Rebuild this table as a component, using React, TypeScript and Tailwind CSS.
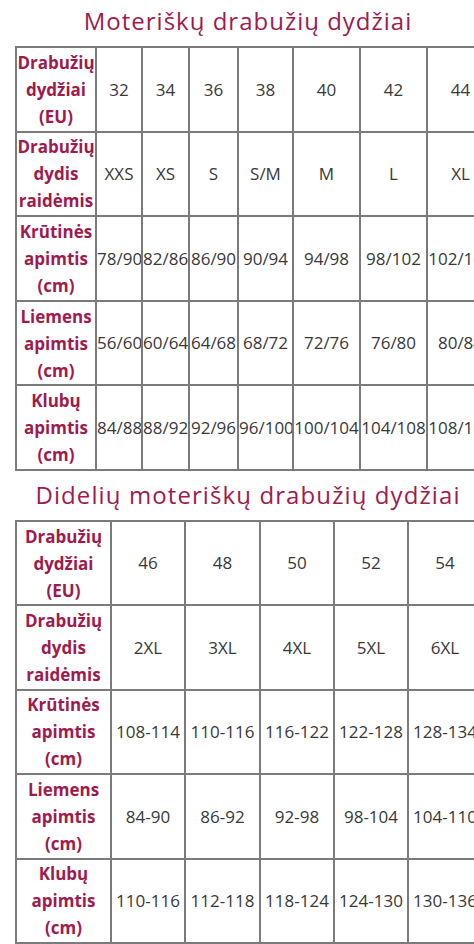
import React from "react";

const crimson = "text-[#a01a4c]";

function SizeTable({
  widths,
  rows,
  rowH,
}: {
  widths: number[];
  rows: { label: string[]; values: string[] }[];
  rowH: number;
}) {
  const total = widths.reduce((a, b) => a + b, 0);
  return (
    <table className="table-fixed border-collapse" style={{ width: total }}>
      <colgroup>
        {widths.map((w, i) => (
          <col key={i} style={{ width: w }} />
        ))}
      </colgroup>
      <tbody>
        {rows.map((r, i) => (
          <tr key={i} style={{ height: rowH }}>
            <td className="border-2 border-[#7b7b7b] p-0 text-center align-middle">
              <div className={`font-bold ${crimson} text-[17px] leading-[27px]`}>
                {r.label.map((l, j) => (
                  <div key={j}>{l}</div>
                ))}
              </div>
            </td>
            {r.values.map((v, j) => (
              <td
                key={j}
                className="border-2 border-[#7b7b7b] p-0 text-center align-middle text-[17px] text-[#383838] whitespace-nowrap overflow-hidden"
              >
                {v}
              </td>
            ))}
          </tr>
        ))}
      </tbody>
    </table>
  );
}

const labels = {
  eu: ["Drabužių", "dydžiai", "(EU)"],
  letters: ["Drabužių", "dydis", "raidėmis"],
  bust: ["Krūtinės", "apimtis", "(cm)"],
  waist: ["Liemens", "apimtis", "(cm)"],
  hips: ["Klubų", "apimtis", "(cm)"],
};

const rows1 = [
  { label: labels.eu, values: ["32", "34", "36", "38", "40", "42", "44"] },
  { label: labels.letters, values: ["XXS", "XS", "S", "S/M", "M", "L", "XL"] },
  { label: labels.bust, values: ["78/90", "82/86", "86/90", "90/94", "94/98", "98/102", "102/106"] },
  { label: labels.waist, values: ["56/60", "60/64", "64/68", "68/72", "72/76", "76/80", "80/84"] },
  { label: labels.hips, values: ["84/88", "88/92", "92/96", "96/100", "100/104", "104/108", "108/112"] },
];

const rows2 = [
  { label: labels.eu, values: ["46", "48", "50", "52", "54"] },
  { label: labels.letters, values: ["2XL", "3XL", "4XL", "5XL", "6XL"] },
  { label: labels.bust, values: ["108-114", "110-116", "116-122", "122-128", "128-134"] },
  { label: labels.waist, values: ["84-90", "86-92", "92-98", "98-104", "104-110"] },
  { label: labels.hips, values: ["110-116", "112-118", "118-124", "124-130", "130-136"] },
];

export default function App() {
  return (
    <div
      className="w-[474px] h-[944px] overflow-hidden bg-white"
      style={{ fontFamily: '"Open Sans", "Noto Sans", sans-serif' }}
    >
      <div className="ml-[15px] w-[466px]">
        <h1 className={`pt-[5px] text-center text-[24px] leading-[32px] tracking-[1px] ${crimson} font-normal whitespace-nowrap`}>
          Moteriškų drabužių dydžiai
        </h1>
        <div className="mt-[9px]">
          <SizeTable widths={[80, 46, 47, 49, 55, 67, 67, 67]} rows={rows1} rowH={84.6} />
        </div>
        <h2 className={`mt-[8px] text-center text-[24px] leading-[32px] tracking-[1.1px] ${crimson} font-normal whitespace-nowrap`}>
          Didelių moteriškų drabužių dydžiai
        </h2>
        <div className="mt-[9px]">
          <SizeTable widths={[95, 74, 75, 74, 74, 74]} rows={rows2} rowH={84.4} />
        </div>
        <div className="h-[10px] bg-[#e6e6e6]" />
      </div>
    </div>
  );
}
